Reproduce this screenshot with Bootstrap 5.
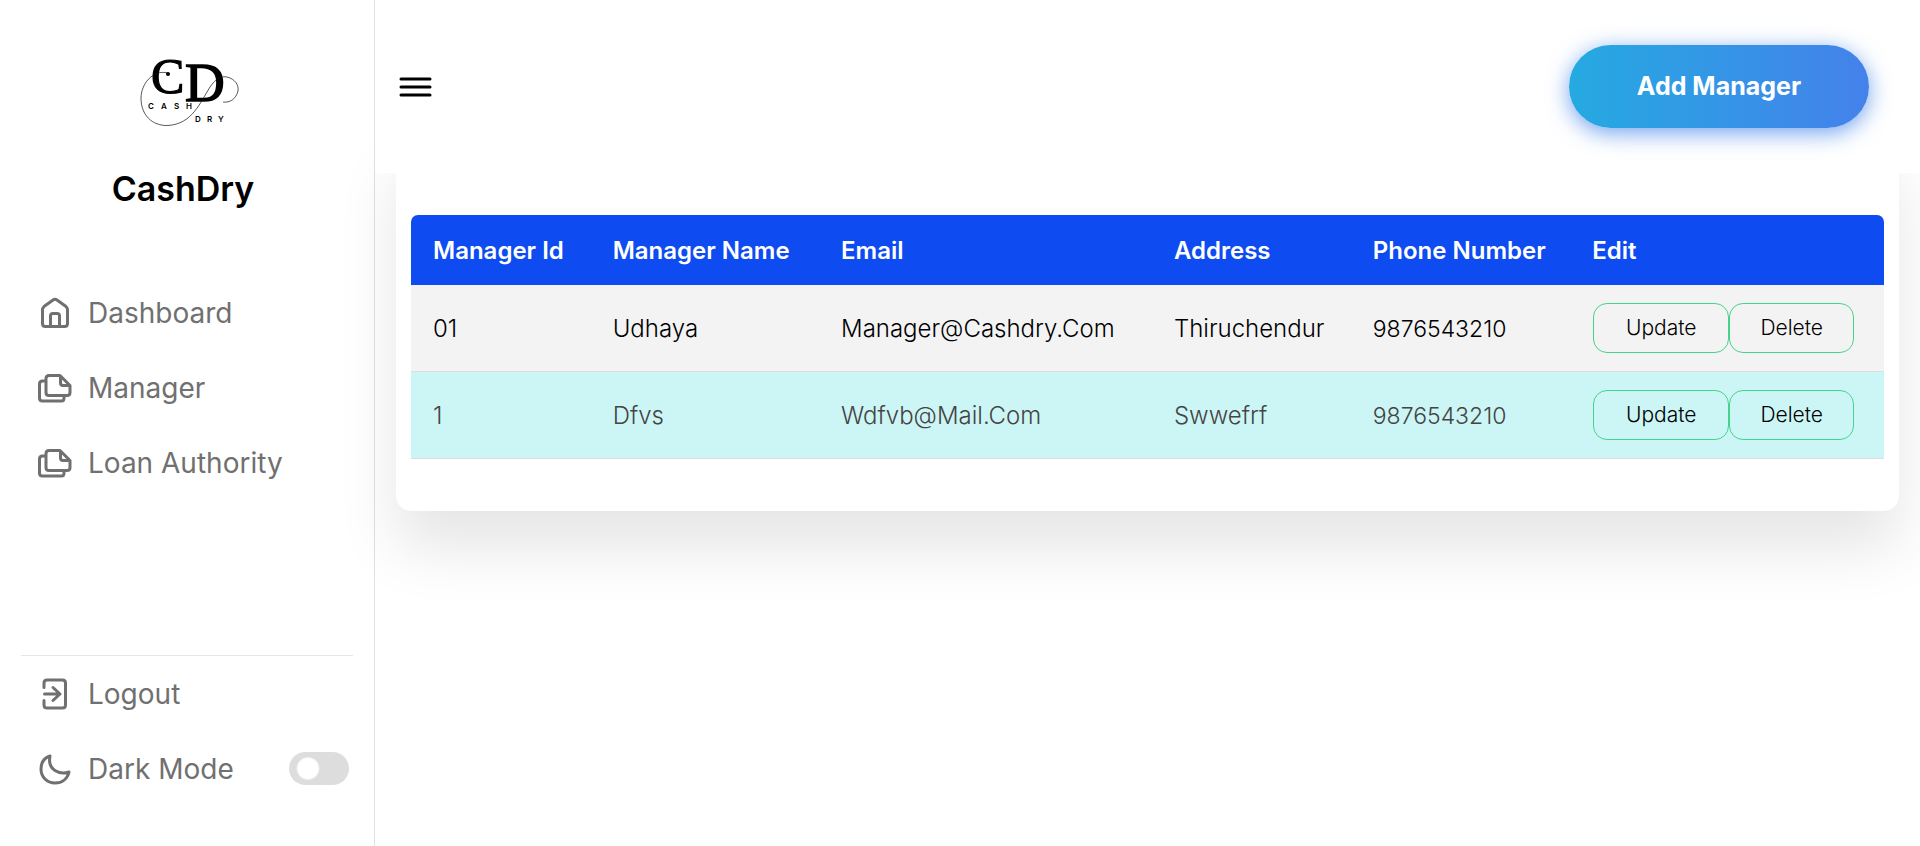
<!DOCTYPE html>
<html lang="en">
<head>
<meta charset="utf-8">
<meta name="viewport" content="width=device-width, initial-scale=1">
<title>CashDry - Manager</title>
<link href="https://cdn.jsdelivr.net/npm/bootstrap@5.3.0/dist/css/bootstrap.min.css" rel="stylesheet">
<style>
  body { font-family: Inter, "Open Sans", sans-serif; background: #fff; color: #000; }
  .side-bar { width: 375px; padding: 45px 21px 40px; border-right: 1px solid #e0e0e0; }
  .brand-logo { margin-left: 109px; }
  .brand-name { font-size: 34px; line-height: 40px; font-weight: 600; padding-right: 8px; margin: 34px 0 0; }
  .side-list { margin-top: 66px; }
  .side-link { height: 75px; padding: 0 4px 0 16px; gap: 15px; font-size: 28px; color: #707070; text-decoration: none; }
  .side-foot { border-top: 1px solid #e6e6e6; }
  .stroke-icon { fill: none; stroke: currentColor; stroke-width: 3; stroke-linecap: round; stroke-linejoin: round; }
  .mode-switch { appearance: none; width: 60px; height: 33px; border-radius: 17px; cursor: pointer;
    background: #ddd radial-gradient(circle at 19px 50%, #fff 10px, #ddd 12px); }
  .mode-switch:checked { background: #0e4bf1 radial-gradient(circle at 41px 50%, #fff 10px, #0e4bf1 12px); }
  .top-bar { height: 173px; padding: 0 51px 0 24px; background: #fff; z-index: 2; }
  .menu-btn { color: #000; }
  .add-btn { width: 300px; height: 83px; border: 0; border-radius: 42px; color: #fff; font-size: 25px; font-weight: 700;
    background: linear-gradient(to right, #25aae1, #4481eb); box-shadow: 0 5px 22px rgba(65, 132, 234, .75); }
  .panel { margin: -40px 21px 0; padding: 82px 15px 52px; border-radius: 15px; background: #fff;
    box-shadow: 0 38px 60px rgba(0, 0, 0, .1); }
  .people { table-layout: fixed; border-collapse: separate; border-spacing: 0; font-size: 24px; line-height: 30px; }
  .people th, .people td { padding: 2px 0 0 22px; vertical-align: middle; white-space: nowrap; }
  .people th { height: 70px; background: #0e4bf1; color: #fff; font-weight: 600; }
  .people th:first-child { border-top-left-radius: 7px; }
  .people th:last-child { border-top-right-radius: 7px; }
  .people td { height: 87px; background: #f3f3f3; font-weight: 300; border-bottom: 1px solid #ddd; }
  .people td:last-child { padding: 0 0 0 23px; }
  .people tr.picked td { background: #ccf6f6; color: #444; }
  .people td.digits { font-size: 23px; }
  .row-btn { height: 50px; border: 1px solid #45d38a; border-radius: 14px; background: transparent; color: #000;
    font-size: 21px; font-weight: 300; padding: 0; width: 125px; }
  .row-btn.wide { width: 136px; }
</style>
</head>
<body>
<div class="d-flex min-vh-100">
  <nav class="side-bar d-flex flex-column flex-shrink-0" aria-label="Main">
    <svg class="brand-logo" width="120" height="90" viewBox="0 0 120 90" role="img" aria-label="Cash Dry logo">
      <text font-family="Liberation Serif, serif" stroke="#000"><tspan x="21" y="48" font-size="50" stroke-width="1.2">C</tspan><tspan x="55" y="56" font-size="55" stroke-width="1.500">D</tspan></text>
      <circle cx="38" cy="29" r="2"/>
      <path fill="none" stroke="#111" stroke-width=".7" d="M38 28C22 24 11 40 11 53c0 17 11 28 27 27.500 24-1.500 32-22.500 42-38.500 6-9 12-11 17-10 8 2 12 8 11 14-2 8-8 12-15 11"/>
      <g font-family="Inter, sans-serif" font-weight="600" font-size="8">
        <text x="18 31 44 56" y="64">CASH</text>
        <text x="65 77 88" y="77">DRY</text>
      </g>
    </svg>
    <h1 class="brand-name text-center">CashDry</h1>
    <div class="side-list">
      <a class="side-link d-flex align-items-center" href="#">
        <svg class="stroke-icon" width="36" height="36"><path d="M5.500 15v13.500q0 3 3 3h19q3 0 3-3V15q0-2-1.500-3.500L20 5q-2-1.500-4 0l-9 6.500q-1.500 1.500-1.500 3.500zM13.500 31V21q0-2.500 2.500-2.500h4q2.500 0 2.500 2.500v10"/></svg>
        <span>Dashboard</span>
      </a>
      <a class="side-link d-flex align-items-center" href="#">
        <svg class="stroke-icon" width="36" height="36"><path d="M8 11H5.500Q2.500 11 2.500 14v14q0 3 3 3h19q2.500 0 2.500-3v-2.500M12 5.500h11l10 10v7q0 3-3 3H12q-3 0-3-3v-14q0-3 3-3zM23.500 6v7q0 2.500 2.500 2.500h6.500"/></svg>
        <span>Manager</span>
      </a>
      <a class="side-link d-flex align-items-center" href="#">
        <svg class="stroke-icon" width="36" height="36"><path d="M8 11H5.500Q2.500 11 2.500 14v14q0 3 3 3h19q2.500 0 2.500-3v-2.500M12 5.500h11l10 10v7q0 3-3 3H12q-3 0-3-3v-14q0-3 3-3zM23.500 6v7q0 2.500 2.500 2.500h6.500"/></svg>
        <span>Loan Authority</span>
      </a>
    </div>
    <div class="side-foot mt-auto">
      <a class="side-link d-flex align-items-center" href="#">
        <svg class="stroke-icon" width="36" height="36"><path d="M7 11.500V7q0-3 3-3h15.500q3 0 3 3v22q0 3-3 3H10q-3 0-3-3v-4.500M7.500 18H23M16 11.500l7 6.500-7 6.500"/></svg>
        <span>Logout</span>
      </a>
      <div class="side-link d-flex align-items-center">
        <svg class="stroke-icon" width="36" height="36"><path d="M13 5C7 7 4 12 4 18c0 8 6 14 14 14 7 0 12.500-4 14-11-8 3-22-1-19-16z"/></svg>
        <label for="mode">Dark Mode</label>
        <input class="mode-switch ms-auto" type="checkbox" role="switch" id="mode">
      </div>
    </div>
  </nav>
  <main class="flex-grow-1">
    <header class="top-bar position-relative d-flex align-items-center justify-content-between">
      <button class="menu-btn btn p-0 border-0" type="button" aria-label="Toggle menu">
        <svg class="stroke-icon d-block" width="34" height="34"><path d="M2 9h29M2 17h29M2 25h29"/></svg>
      </button>
      <button class="add-btn" type="button">Add Manager</button>
    </header>
    <section class="panel">
      <table class="people w-100">
        <colgroup>
          <col style="width:12.2%"><col style="width:15.5%"><col style="width:22.6%"><col style="width:13.5%"><col style="width:14.9%"><col style="width:21.3%">
        </colgroup>
        <thead>
          <tr><th>Manager Id</th><th>Manager Name</th><th>Email</th><th>Address</th><th>Phone Number</th><th>Edit</th></tr>
        </thead>
        <tbody>
          <tr>
            <td>01</td><td>Udhaya</td><td>Manager@Cashdry.Com</td><td>Thiruchendur</td><td class="digits">9876543210</td>
            <td><div class="d-flex"><button class="row-btn wide" type="button">Update</button><button class="row-btn" type="button">Delete</button></div></td>
          </tr>
          <tr class="picked">
            <td>1</td><td>Dfvs</td><td>Wdfvb@Mail.Com</td><td>Swwefrf</td><td class="digits">9876543210</td>
            <td><div class="d-flex"><button class="row-btn wide" type="button">Update</button><button class="row-btn" type="button">Delete</button></div></td>
          </tr>
        </tbody>
      </table>
    </section>
  </main>
</div>
<script src="https://cdn.jsdelivr.net/npm/bootstrap@5.3.0/dist/js/bootstrap.bundle.min.js"></script>
</body>
</html>
